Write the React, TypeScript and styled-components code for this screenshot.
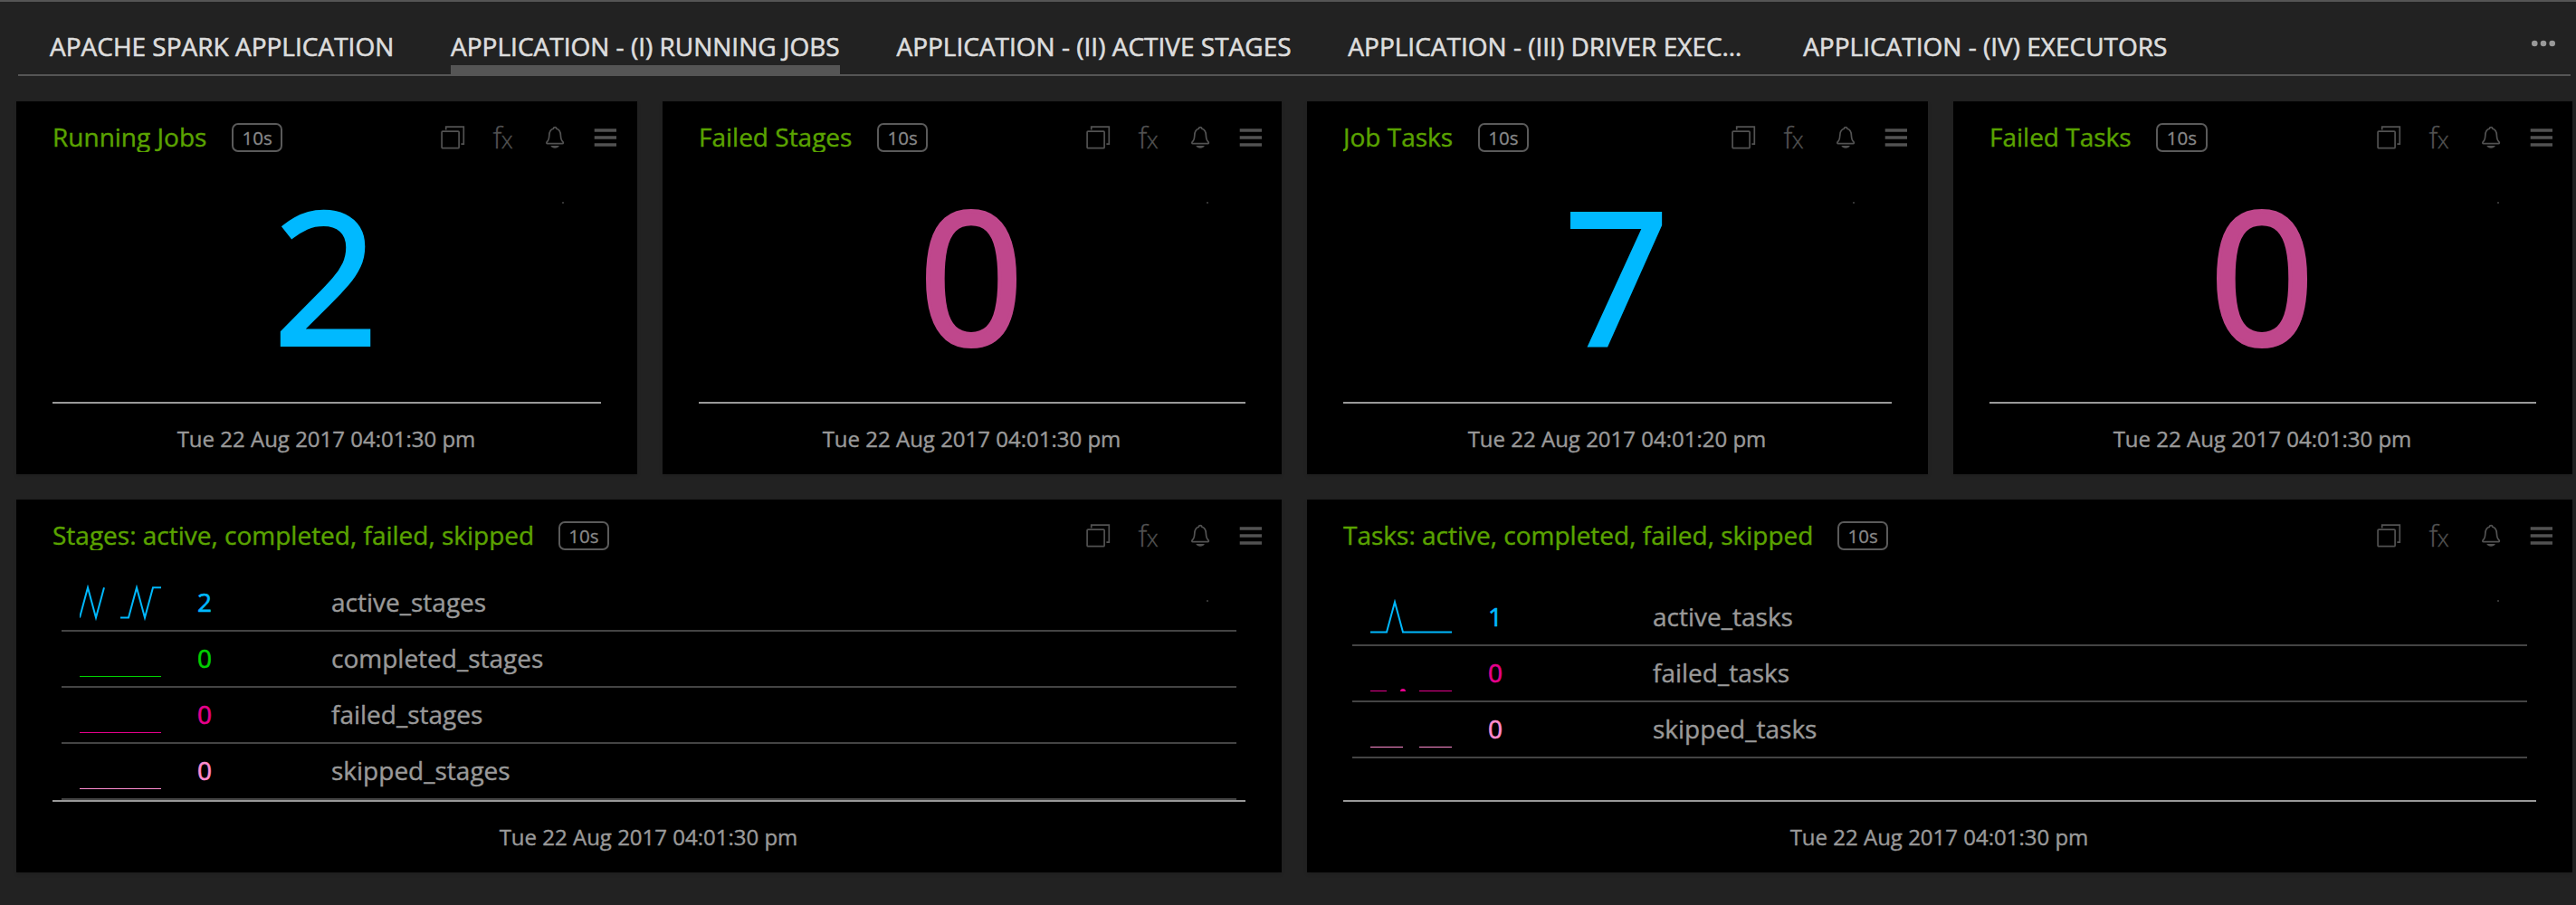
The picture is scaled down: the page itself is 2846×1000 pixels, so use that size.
import React from "react";
import styled, { createGlobalStyle } from "styled-components";

const GlobalStyle = createGlobalStyle`
  * { box-sizing: border-box; }
  body {
    margin: 0;
    background: #222;
    font-family: "Open Sans", "Noto Sans", sans-serif;
  }
`;

const Page = styled.div`
  height: 1000px;
  overflow: hidden;
  border-top: 2px solid #555;
  background: #222;
`;

const TabBar = styled.nav`
  display: flex;
  justify-content: space-between;
  height: 82px;
  margin: 0 6px 0 20px;
  padding: 28px 17px 0 35px;
  border-bottom: 2px solid #555;
`;

const Tabs = styled.div`
  display: flex;
  gap: 62.8px;
`;

const Tab = styled.a<{ $active?: boolean; $width?: number }>`
  width: ${(p) => (p.$width ? `${p.$width}px` : "auto")};
  height: 52px;
  border-bottom: 10px solid ${(p) => (p.$active ? "#555" : "transparent")};
  color: #ddd;
  font-size: 28px;
  line-height: 42px;
  white-space: nowrap;
  -webkit-text-stroke: 0.6px #ddd;
`;

const MoreButton = styled.svg`
  display: block;
  width: 26px;
  height: 8px;
  margin-top: 14px;
  fill: #999;
`;

const PanelHeader = styled.header`
  display: flex;
  flex: none;
  align-items: flex-start;
  height: 56px;
  padding: 24px 20px 0 40px;
`;

const Board = styled.main`
  display: grid;
  grid-template-columns: 686px 684px 686px 684px;
  grid-template-rows: 412px 412px;
  gap: 28px;
  padding: 28px 4px 0 18px;

  > :nth-child(1) ${PanelHeader}, > :nth-child(3) ${PanelHeader} {
    padding-right: 21px;
  }
`;

const Panel = styled.section<{ $wide?: boolean }>`
  position: relative;
  display: flex;
  flex-direction: column;
  grid-column: span ${(p) => (p.$wide ? 2 : 1)};
  background: #000;
  box-shadow: 0 2px 4px rgba(0, 0, 0, 0.12);
`;

const Title = styled.h2<{ $gap: number }>`
  height: 32px;
  margin: 0 ${(p) => p.$gap}px 0 0;
  overflow: hidden;
  color: #5aa300;
  font-size: 28px;
  font-weight: 400;
  line-height: 30px;
  white-space: nowrap;
  -webkit-text-stroke: 0.4px #5aa300;
`;

const Badge = styled.span`
  width: 56.5px;
  height: 32px;
  border: 2px solid #5a5a5a;
  border-radius: 7px;
  color: #888;
  font-size: 20.5px;
  line-height: 28px;
  text-align: center;
  -webkit-text-stroke: 0.3px #888;
`;

const Tools = styled.div`
  display: flex;
  gap: 28.3px;
  margin: 2px 0 0 auto;
`;

const ToolIcon = styled.svg`
  display: block;
  width: 28px;
  height: 28px;
  overflow: visible;
  fill: none;
  stroke: #525252;
  stroke-width: 1.7;
`;

const FxText = styled.text<{ $size: number }>`
  fill: #525252;
  stroke: #525252;
  stroke-width: 0.3;
  font-size: ${(p) => p.$size}px;
  font-weight: 300;
`;

const Speck = styled.i`
  position: absolute;
  top: 111px;
  right: 81px;
  width: 2px;
  height: 2px;
  background: #333;
`;

const PanelBody = styled.div`
  flex: 1;
  min-height: 0;
`;

const BigNumber = styled.div<{ $color: string }>`
  padding-right: 2px;
  color: ${(p) => p.$color};
  font-size: 204px;
  line-height: 269px;
  text-align: center;
  -webkit-text-stroke: 4px ${(p) => p.$color};
`;

const PanelFooter = styled.footer`
  flex: none;
  height: 80px;
  margin: 0 40px;
  padding-right: 1px;
  border-top: 2px solid #999;
  color: #999;
  font-size: 24px;
  line-height: 77px;
  text-align: center;
  -webkit-text-stroke: 0.4px #999;
`;

const SeriesList = styled.div<{ $top: number }>`
  margin: ${(p) => p.$top}px 50px 0;
`;

const SeriesRow = styled.div<{ $valueWidth: number }>`
  display: grid;
  grid-template-columns: 130px ${(p) => p.$valueWidth}px 1fr;
  height: 62px;
  padding-left: 20px;
  border-bottom: 2px solid #444;
  font-size: 28px;
  line-height: 58px;
`;

const Sparkline = styled.svg<{ $color: string }>`
  display: block;
  width: 90px;
  height: 40px;
  margin-top: 10px;
  overflow: hidden;
  fill: none;
  stroke: ${(p) => p.$color};
  stroke-width: 2;
`;

const Value = styled.span<{ $color: string }>`
  color: ${(p) => p.$color};
  -webkit-text-stroke: 0.6px ${(p) => p.$color};
`;

const Label = styled.span`
  color: #999;
  -webkit-text-stroke: 0.4px #999;
`;

const BLUE = "#00b9ff";
const GREEN = "#00d000";
const MAGENTA = "#e6008c";
const PINK = "#ff8cd0";

interface Series {
  name: string;
  value: number;
  color: string;
  path: string;
  dot?: number;
}

const FLAT = "M0 40H90";

const stageSeries: Series[] = [
  { name: "active_stages", value: 2, color: BLUE, path: "M0 36.5L9 3.3L18 36.5L27 3.3M45 36.5H54L63 3.3L72 36.5L81 3.3H90" },
  { name: "completed_stages", value: 0, color: GREEN, path: FLAT },
  { name: "failed_stages", value: 0, color: MAGENTA, path: FLAT },
  { name: "skipped_stages", value: 0, color: PINK, path: FLAT },
];

const taskSeries: Series[] = [
  { name: "active_tasks", value: 1, color: BLUE, path: "M0 36.5H18L27 3.3L36 36.5H90" },
  { name: "failed_tasks", value: 0, color: MAGENTA, path: "M0 40H18M54 40H90", dot: 36 },
  { name: "skipped_tasks", value: 0, color: PINK, path: "M0 40H36M54 40H90" },
];

const tabs = [
  { label: "APACHE SPARK APPLICATION" },
  { label: "APPLICATION - (I) RUNNING JOBS", active: true },
  { label: "APPLICATION - (II) ACTIVE STAGES" },
  { label: "APPLICATION - (III) DRIVER EXEC…", width: 440 },
  { label: "APPLICATION - (IV) EXECUTORS" },
];

const stats = [
  { title: "Running Jobs", value: 2, color: BLUE, time: "Tue 22 Aug 2017 04:01:30 pm" },
  { title: "Failed Stages", value: 0, color: "#bf478c", time: "Tue 22 Aug 2017 04:01:30 pm" },
  { title: "Job Tasks", value: 7, color: BLUE, time: "Tue 22 Aug 2017 04:01:20 pm" },
  { title: "Failed Tasks", value: 0, color: "#bf478c", time: "Tue 22 Aug 2017 04:01:30 pm" },
];

function PanelTools() {
  return (
    <Tools>
      <ToolIcon viewBox="0 0 28 28">
        <rect x="2.1" y="7.1" width="19" height="18.6" rx="1" />
        <path d="M6.7 5.5V2.2H26.3V21.2H23.4" />
      </ToolIcon>
      <ToolIcon viewBox="0 0 28 28">
        <FxText $size={33} x="2.6" y="26">f</FxText>
        <FxText $size={26} x="11.8" y="26">x</FxText>
      </ToolIcon>
      <ToolIcon viewBox="0 0 28 28">
        <path d="M14.1 2.6C15.2 2.6 15.8 3.3 16 4.3C19 5.2 20.3 8 20.4 11.5C20.6 15.6 21.3 17.4 22.8 18.7C23.7 19.5 23.4 20.7 22.4 20.7H5.8C4.8 20.7 4.5 19.5 5.4 18.7C6.9 17.4 7.6 15.6 7.8 11.5C7.9 8 9.2 5.2 12.2 4.3C12.4 3.3 13 2.6 14.1 2.6Z" />
        <path d="M9.3 23H18.9C18 24.8 16.2 25.8 14.1 25.8S10.2 24.8 9.3 23Z" fill="#525252" stroke="none" />
      </ToolIcon>
      <ToolIcon viewBox="0 0 28 28">
        <path d="M1.7 6H26M1.7 14H26M1.7 22H26" strokeWidth="3.7" />
      </ToolIcon>
    </Tools>
  );
}

function Header({ title, gap }: { title: string; gap: number }) {
  return (
    <PanelHeader>
      <Title $gap={gap}>{title}</Title>
      <Badge>10s</Badge>
      <PanelTools />
    </PanelHeader>
  );
}

interface SeriesPanelProps {
  title: string;
  time: string;
  series: Series[];
  top: number;
  valueWidth: number;
}

function SeriesPanel({ title, time, series, top, valueWidth }: SeriesPanelProps) {
  return (
    <Panel $wide>
      <Header title={title} gap={26.5} />
      <PanelBody>
        <SeriesList $top={top}>
          {series.map((s) => (
            <SeriesRow key={s.name} $valueWidth={valueWidth}>
              <Sparkline viewBox="0 0 90 40" $color={s.color}>
                <path d={s.path} />
                {s.dot !== undefined && <circle cx={s.dot} cy="40" r="3" fill={s.color} stroke="none" />}
              </Sparkline>
              <Value $color={s.color}>{s.value}</Value>
              <Label>{s.name}</Label>
            </SeriesRow>
          ))}
        </SeriesList>
      </PanelBody>
      <PanelFooter>{time}</PanelFooter>
      <Speck />
    </Panel>
  );
}

export default function App() {
  return (
    <Page>
      <GlobalStyle />
      <TabBar>
        <Tabs>
          {tabs.map((t) => (
            <Tab key={t.label} $active={t.active} $width={t.width}>{t.label}</Tab>
          ))}
        </Tabs>
        <MoreButton viewBox="0 0 26 8">
          <circle cx="3.3" cy="4" r="3.3" />
          <circle cx="13" cy="4" r="3.3" />
          <circle cx="22.7" cy="4" r="3.3" />
        </MoreButton>
      </TabBar>
      <Board>
        {stats.map((s) => (
          <Panel key={s.title}>
            <Header title={s.title} gap={27.5} />
            <PanelBody>
              <BigNumber $color={s.color}>{s.value}</BigNumber>
            </PanelBody>
            <PanelFooter>{s.time}</PanelFooter>
            <Speck />
          </Panel>
        ))}
        <SeriesPanel
          title="Stages: active, completed, failed, skipped"
          time="Tue 22 Aug 2017 04:01:30 pm"
          series={stageSeries}
          top={28}
          valueWidth={148}
        />
        <SeriesPanel
          title="Tasks: active, completed, failed, skipped"
          time="Tue 22 Aug 2017 04:01:30 pm"
          series={taskSeries}
          top={44}
          valueWidth={182}
        />
      </Board>
    </Page>
  );
}
